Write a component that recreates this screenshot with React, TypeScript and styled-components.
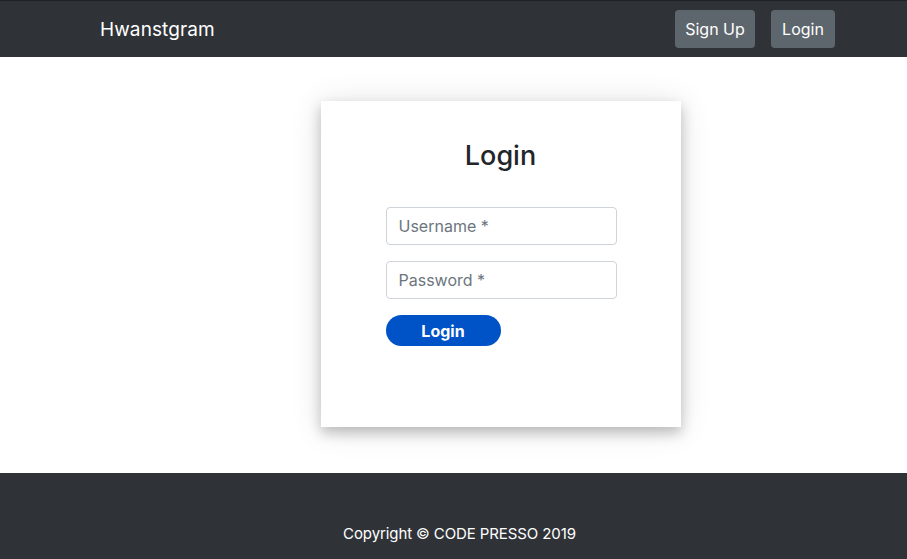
import React from "react";
import styled, { createGlobalStyle } from "styled-components";

const GlobalStyle = createGlobalStyle`
  html, body {
    margin: 0;
    padding: 0;
    background: #ffffff;
    font-family: Inter, "Noto Sans", sans-serif;
    -webkit-font-smoothing: antialiased;
  }
  * { box-sizing: border-box; }
`;

const Page = styled.div`
  display: flex;
  flex-direction: column;
  min-height: 559px;
`;

const Navbar = styled.nav`
  height: 57px;
  background: #2f3338;
  border-top: 1px solid #1f2226;
  display: flex;
  align-items: center;
  justify-content: space-between;
  padding: 0 72px 0 100px;
`;

const Brand = styled.a`
  color: #ffffff;
  font-size: 19px;
  text-decoration: none;
  letter-spacing: 0.1px;
`;

const NavButtons = styled.div`
  display: flex;
  gap: 16px;
`;

const NavButton = styled.button<{ $w: number }>`
  width: ${(p) => p.$w}px;
  height: 38px;
  border: none;
  border-radius: 4px;
  background: #5e666d;
  color: #ffffff;
  font-family: inherit;
  font-size: 16px;
  padding: 0;
`;

const Main = styled.main`
  flex: 1;
  display: flex;
  justify-content: center;
  padding: 44px 0 46px 94px;
`;

const Card = styled.div`
  width: 360px;
  height: 326px;
  background: #ffffff;
  box-shadow: 0 6px 12px rgba(0, 0, 0, 0.22), 0 2px 30px rgba(0, 0, 0, 0.12);
  display: flex;
  flex-direction: column;
  align-items: center;
  padding-top: 39px;
`;

const Title = styled.h2`
  margin: 0 0 35px 0;
  font-size: 27px;
  font-weight: 500;
  color: #222529;
  line-height: 32px;
`;

const Form = styled.form`
  width: 231px;
  align-self: flex-start;
  margin-left: 65px;
  display: flex;
  flex-direction: column;
  gap: 16px;
`;

const Input = styled.input`
  width: 100%;
  height: 38px;
  border: 1px solid #ced4da;
  border-radius: 4px;
  padding: 0 12px;
  font-family: inherit;
  font-size: 16px;
  color: #495057;
  &::placeholder {
    color: #6c757d;
  }
`;

const SubmitButton = styled.button`
  width: 115px;
  height: 31px;
  border: none;
  border-radius: 16px;
  background: #0052c7;
  color: #ffffff;
  font-family: inherit;
  font-size: 16px;
  font-weight: 700;
  padding: 0;
`;

const Footer = styled.footer`
  height: 86px;
  background: #2f3338;
  display: flex;
  align-items: flex-end;
  justify-content: center;
  padding: 0 0 16px 12px;
  color: #ffffff;
  font-size: 15px;
  letter-spacing: -0.1px;
`;

export default function App() {
  return (
    <Page>
      <GlobalStyle />
      <Navbar>
        <Brand href="#">Hwanstgram</Brand>
        <NavButtons>
          <NavButton $w={80}>Sign Up</NavButton>
          <NavButton $w={64}>Login</NavButton>
        </NavButtons>
      </Navbar>
      <Main>
        <Card>
          <Title>Login</Title>
          <Form onSubmit={(e) => e.preventDefault()}>
            <Input placeholder="Username *" />
            <Input type="password" placeholder="Password *" />
            <SubmitButton type="submit">Login</SubmitButton>
          </Form>
        </Card>
      </Main>
      <Footer>Copyright © CODE PRESSO 2019</Footer>
    </Page>
  );
}
